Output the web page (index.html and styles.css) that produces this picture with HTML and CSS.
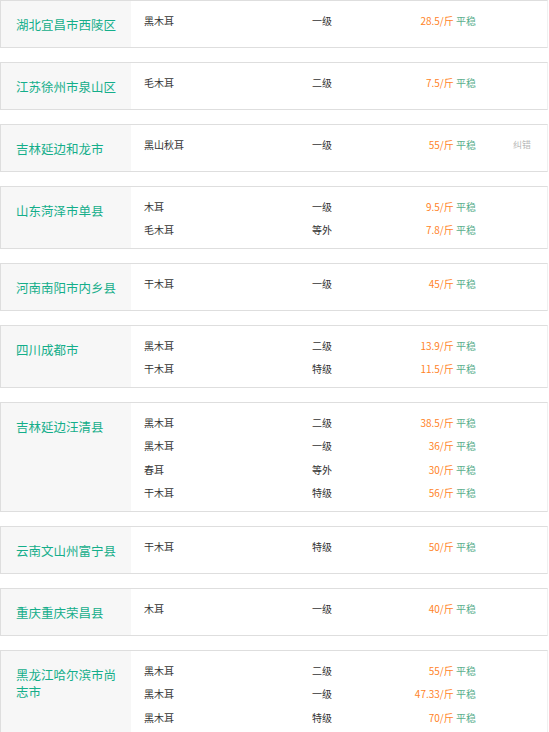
FILE: index.html
```html
<!DOCTYPE html>
<html lang="zh">
<head>
<meta charset="utf-8">
<link rel="stylesheet" href="styles.css">
</head>
<body>
<div class="list">
  <div class="card">
    <div class="place">湖北宜昌市西陵区</div>
    <div class="rows">
      <div class="row"><span class="prod">黑木耳</span><span class="grade">一级</span><span class="price"><em>28.5/斤</em> <i>平稳</i></span></div>
    </div>
  </div>
  <div class="card">
    <div class="place">江苏徐州市泉山区</div>
    <div class="rows">
      <div class="row"><span class="prod">毛木耳</span><span class="grade">二级</span><span class="price"><em>7.5/斤</em> <i>平稳</i></span></div>
    </div>
  </div>
  <div class="card">
    <div class="place">吉林延边和龙市</div>
    <div class="rows">
      <div class="row"><span class="prod">黑山秋耳</span><span class="grade">一级</span><span class="price"><em>55/斤</em> <i>平稳</i></span><span class="fix">纠错</span></div>
    </div>
  </div>
  <div class="card">
    <div class="place">山东菏泽市单县</div>
    <div class="rows">
      <div class="row"><span class="prod">木耳</span><span class="grade">一级</span><span class="price"><em>9.5/斤</em> <i>平稳</i></span></div>
      <div class="row"><span class="prod">毛木耳</span><span class="grade">等外</span><span class="price"><em>7.8/斤</em> <i>平稳</i></span></div>
    </div>
  </div>
  <div class="card">
    <div class="place">河南南阳市内乡县</div>
    <div class="rows">
      <div class="row"><span class="prod">干木耳</span><span class="grade">一级</span><span class="price"><em>45/斤</em> <i>平稳</i></span></div>
    </div>
  </div>
  <div class="card">
    <div class="place">四川成都市</div>
    <div class="rows">
      <div class="row"><span class="prod">黑木耳</span><span class="grade">二级</span><span class="price"><em>13.9/斤</em> <i>平稳</i></span></div>
      <div class="row"><span class="prod">干木耳</span><span class="grade">特级</span><span class="price"><em>11.5/斤</em> <i>平稳</i></span></div>
    </div>
  </div>
  <div class="card">
    <div class="place">吉林延边汪清县</div>
    <div class="rows">
      <div class="row"><span class="prod">黑木耳</span><span class="grade">二级</span><span class="price"><em>38.5/斤</em> <i>平稳</i></span></div>
      <div class="row"><span class="prod">黑木耳</span><span class="grade">一级</span><span class="price"><em>36/斤</em> <i>平稳</i></span></div>
      <div class="row"><span class="prod">春耳</span><span class="grade">等外</span><span class="price"><em>30/斤</em> <i>平稳</i></span></div>
      <div class="row"><span class="prod">干木耳</span><span class="grade">特级</span><span class="price"><em>56/斤</em> <i>平稳</i></span></div>
    </div>
  </div>
  <div class="card">
    <div class="place">云南文山州富宁县</div>
    <div class="rows">
      <div class="row"><span class="prod">干木耳</span><span class="grade">特级</span><span class="price"><em>50/斤</em> <i>平稳</i></span></div>
    </div>
  </div>
  <div class="card">
    <div class="place">重庆重庆荣昌县</div>
    <div class="rows">
      <div class="row"><span class="prod">木耳</span><span class="grade">一级</span><span class="price"><em>40/斤</em> <i>平稳</i></span></div>
    </div>
  </div>
  <div class="card">
    <div class="place">黑龙江哈尔滨市尚志市</div>
    <div class="rows">
      <div class="row"><span class="prod">黑木耳</span><span class="grade">二级</span><span class="price"><em>55/斤</em> <i>平稳</i></span></div>
      <div class="row"><span class="prod">黑木耳</span><span class="grade">一级</span><span class="price"><em>47.33/斤</em> <i>平稳</i></span></div>
      <div class="row"><span class="prod">黑木耳</span><span class="grade">特级</span><span class="price"><em>70/斤</em> <i>平稳</i></span></div>
    </div>
  </div>
</div>
</body>
</html>
```

FILE: styles.css
```css
html, body {
  margin: 0;
  padding: 0;
  background: #fff;
}
body {
  font-family: "Noto Sans CJK SC", "Noto Sans", sans-serif;
  color: #333;
  overflow: hidden;
}
.list {
  display: flex;
  flex-direction: column;
  gap: 14px;
  width: 548px;
}
.card {
  display: flex;
  border: 1px solid #dedede;
  border-right-color: #f0f0f0;
  min-height: 46px;
}
.place {
  width: 130px;
  flex: none;
  box-sizing: border-box;
  background: #f7f7f7;
  color: #14ae8a;
  font-size: 12.5px;
  line-height: 17px;
  padding: 15px 12px 14px 15px;
}
.rows {
  flex: 1;
  padding: 7.5px 0 6.5px 13px;
  display: flex;
  flex-direction: column;
}
.row {
  display: flex;
  align-items: center;
  height: 23.5px;
  font-size: 10px;
  line-height: 23.5px;
}
.prod {
  width: 168px;
  flex: none;
}
.grade {
  width: 80px;
  flex: none;
}
.price {
  width: 84px;
  flex: none;
  text-align: right;
  white-space: nowrap;
}
.price em {
  font-style: normal;
  color: #ff8327;
}
.price i {
  font-style: normal;
  color: #5aae8c;
}
.fix {
  margin-left: 37px;
  font-size: 9px;
  color: #b8b8b8;
}
```
